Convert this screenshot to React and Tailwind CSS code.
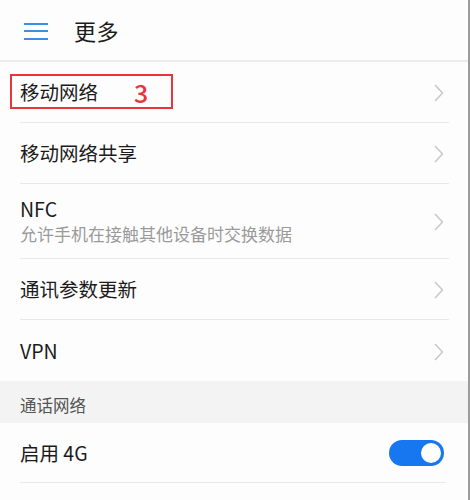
import { useState } from 'react';

const FONT = { fontFamily: '"Noto Sans CJK SC", "Noto Sans", sans-serif' };

function Chevron() {
  return (
    <svg width="10" height="18" viewBox="0 0 10 18" className="shrink-0">
      <path d="M1.5 1.5 L8.5 9 L1.5 16.5" fill="none" stroke="#c9c9c9" strokeWidth="1.6" strokeLinecap="round" strokeLinejoin="round" />
    </svg>
  );
}

function Row({ title, sub, height = 'h-[61px]' }) {
  return (
    <div className={`${height} ml-5 mr-[19px] flex items-center justify-between border-b border-[#e9e9e9]`}>
      <div className="flex flex-col">
        <span className="text-[19.5px] leading-[24px] text-[#1b1b1b]">{title}</span>
        {sub && <span className="text-[17px] leading-[24px] text-[#9a9a9a] mt-[1px]">{sub}</span>}
      </div>
      <div className="pr-[5px] pt-[2px]"><Chevron /></div>
    </div>
  );
}

export default function App() {
  const [on, setOn] = useState(true);

  return (
    <div style={FONT} className="w-[470px] h-[500px] overflow-hidden bg-[#fdfdfd] border-r-2 border-[#9c9c9c]">
      {/* header */}
      <div className="h-[62px] flex items-center border-b-2 border-[#ececec]">
        <div className="ml-6 flex flex-col gap-[5.5px] w-6 mt-[2px]">
          <span className="h-[2px] bg-[#3a8ee6] block" />
          <span className="h-[2px] bg-[#3a8ee6] block" />
          <span className="h-[2px] bg-[#3a8ee6] block" />
        </div>
        <span className="ml-[26px] text-[22px] text-[#1b1b1b] tracking-[0.5px]">更多</span>
      </div>

      {/* 移动网络 with marker */}
      <div className="h-[61px] ml-5 mr-[19px] flex items-center justify-between border-b border-[#e9e9e9] relative">
        <div className="absolute -left-[10px] top-[12px] w-[163px] h-[35px] border-2 border-[#e8353b]" />
        <div className="flex items-center">
          <span className="text-[19.5px] leading-[24px] text-[#1b1b1b]">移动网络</span>
          <span className="ml-[36px] text-[25px] leading-[24px] font-medium text-[#e8353b]">3</span>
        </div>
        <div className="pr-[5px] pt-[2px]"><Chevron /></div>
      </div>

      <Row title="移动网络共享" />
      <Row title="NFC" sub="允许手机在接触其他设备时交换数据" height="h-[75px]" />
      <Row title="通讯参数更新" />
      <div className="h-[61px] ml-5 mr-[19px] flex items-center justify-between">
        <span className="text-[19.5px] leading-[24px] text-[#1b1b1b]">VPN</span>
        <div className="pr-[5px] pt-[2px]"><Chevron /></div>
      </div>

      {/* section header */}
      <div className="h-[42px] bg-[#f3f3f3] flex items-center pl-5">
        <span className="text-[16.5px] text-[#555555] mt-[6px]">通话网络</span>
      </div>

      <div className="h-[60px] ml-5 mr-[22px] flex items-center justify-between border-b border-[#e9e9e9]">
        <span className="text-[19.5px] leading-[24px] text-[#1b1b1b]">启用 4G</span>
        <button
          onClick={() => setOn(!on)}
          className={`w-[55px] h-[26px] mr-[2px] rounded-full flex items-center px-[3px] ${on ? 'bg-[#1677f0] justify-end' : 'bg-[#cccccc] justify-start'}`}
        >
          <span className="w-[20px] h-[20px] rounded-full bg-white block" />
        </button>
      </div>
    </div>
  );
}
